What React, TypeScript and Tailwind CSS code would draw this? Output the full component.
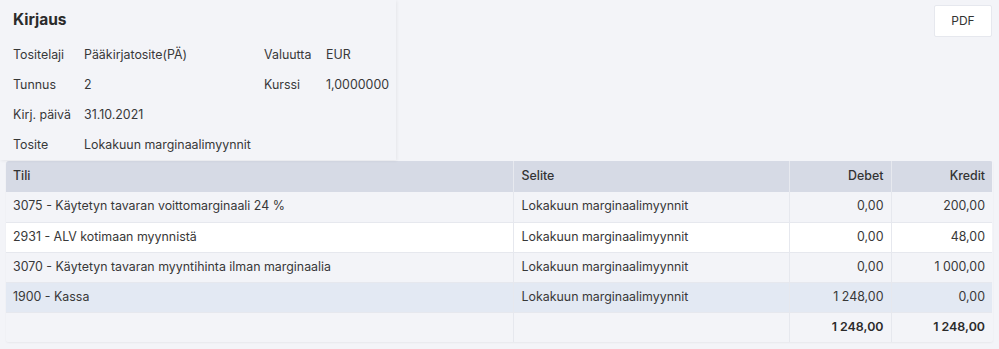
import { Fragment } from 'react';

const META = [
  { label: 'Tositelaji', value: 'Pääkirjatosite(PÄ)', label2: 'Valuutta', value2: 'EUR' },
  { label: 'Tunnus', value: '2', label2: 'Kurssi', value2: '1,0000000' },
  { label: 'Kirj. päivä', value: '31.10.2021' },
  { label: 'Tosite', value: 'Lokakuun marginaalimyynnit' },
];

const ROWS = [
  { tili: '3075 - Käytetyn tavaran voittomarginaali 24 %', debet: '0,00', kredit: '200,00', bg: 'bg-[#f3f4f8]' },
  { tili: '2931 - ALV kotimaan myynnistä', debet: '0,00', kredit: '48,00', bg: 'bg-white' },
  { tili: '3070 - Käytetyn tavaran myyntihinta ilman marginaalia', debet: '0,00', kredit: '1 000,00', bg: 'bg-[#f3f4f8]' },
  { tili: '1900 - Kassa', debet: '1 248,00', kredit: '0,00', bg: 'bg-[#e3e9f3]' },
];

export default function App() {
  return (
    <div className="w-[999px] h-[349px] overflow-hidden bg-[#f3f4f8] text-[12.4px] text-[#383838] font-['Inter','Noto_Sans',sans-serif]">
      <div className="flex justify-between items-start">
        <div className="w-[396px] pl-[13px] pt-[10px] shadow-[1px_1px_3px_rgba(0,0,0,0.06)]">
          <div className="text-[15.5px] font-bold leading-5 mb-[10px] text-[#2b2b2b]">Kirjaus</div>
          <div className="grid grid-cols-[71px_180px_62px_1fr]">
            {META.map((m) => (
              <Fragment key={m.label}>
                <div className="h-[30px] flex items-center">{m.label}</div>
                <div className="h-[30px] flex items-center">{m.value}</div>
                <div className="h-[30px] flex items-center">{m.label2 ?? ''}</div>
                <div className="h-[30px] flex items-center">{m.value2 ?? ''}</div>
              </Fragment>
            ))}
          </div>
        </div>
        <button className="mt-[5px] mr-[7px] w-[58px] h-[32px] bg-white border border-[#e6e8ee] rounded-[2px] text-[12px] text-[#333]">
          PDF
        </button>
      </div>

      <div className="mx-[6px] mt-px rounded-[3px] overflow-hidden shadow-[0_1px_2px_rgba(0,0,0,0.05)]">
        <table className="w-[986px] table-fixed border-collapse">
          <colgroup>
            <col className="w-[507px]" />
            <col className="w-[276px]" />
            <col className="w-[102px]" />
            <col className="w-[101px]" />
          </colgroup>
          <thead>
            <tr className="bg-[#d6dae5] h-[31px] text-[#333]">
              <th className="text-left font-medium px-[7px] border-r border-[#e7e9ef]">Tili</th>
              <th className="text-left font-medium px-[8px] border-r border-[#e7e9ef]">Selite</th>
              <th className="text-right font-medium px-[7px] border-r border-[#e7e9ef]">Debet</th>
              <th className="text-right font-medium px-[7px]">Kredit</th>
            </tr>
          </thead>
          <tbody>
            {ROWS.map((r) => (
              <tr key={r.tili} className={`${r.bg} h-[30px] border-b border-[#e6e8ee]`}>
                <td className="px-[7px] border-r border-[#e6e8ee] whitespace-nowrap">{r.tili}</td>
                <td className="px-[8px] border-r border-[#e6e8ee]">Lokakuun marginaalimyynnit</td>
                <td className="px-[7px] text-right border-r border-[#e6e8ee]">{r.debet}</td>
                <td className="px-[7px] text-right">{r.kredit}</td>
              </tr>
            ))}
            <tr className="bg-[#f3f4f8] h-[30px] font-semibold text-[#2b2b2b]">
              <td className="border-r border-[#e6e8ee]"></td>
              <td className="border-r border-[#e6e8ee]"></td>
              <td className="px-[7px] text-right border-r border-[#e6e8ee]">1 248,00</td>
              <td className="px-[7px] text-right">1 248,00</td>
            </tr>
          </tbody>
        </table>
      </div>
    </div>
  );
}
